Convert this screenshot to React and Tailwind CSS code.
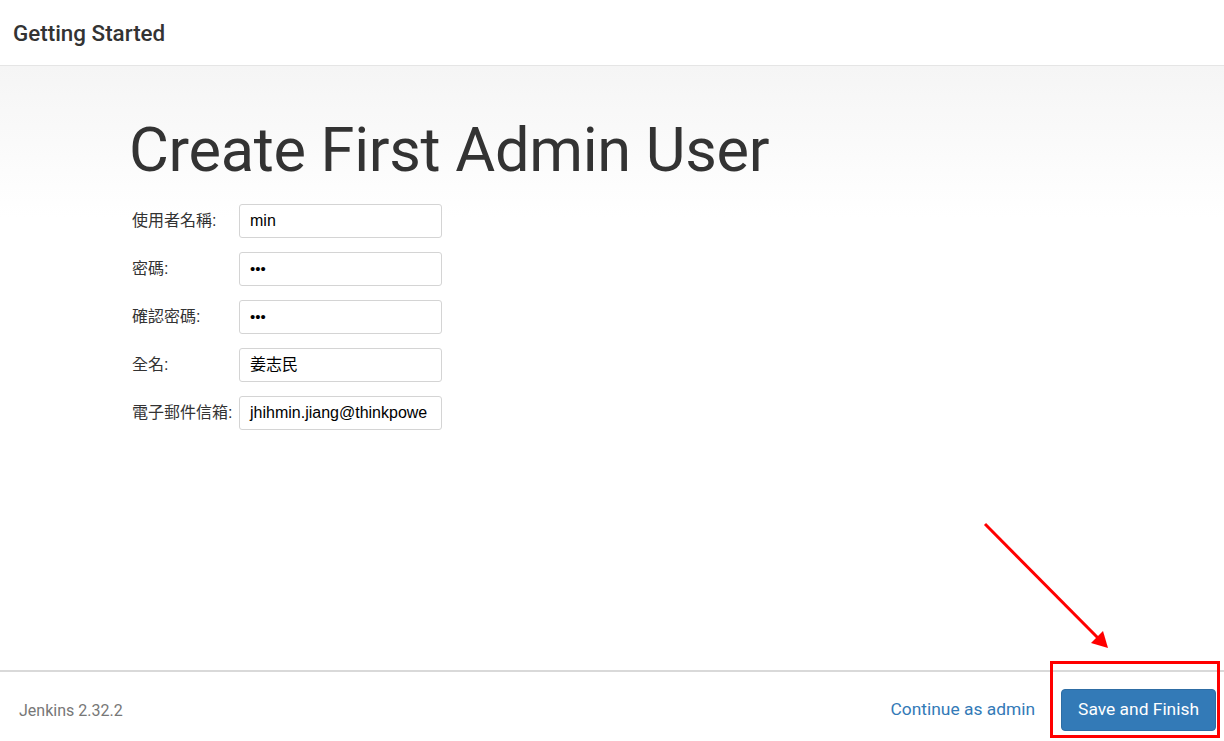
import React from "react";

const rows = [
  { label: "使用者名稱:", value: "min" },
  { label: "密碼:", value: "•••", pw: true },
  { label: "確認密碼:", value: "•••", pw: true },
  { label: "全名:", value: "姜志民" },
  { label: "電子郵件信箱:", value: "jhihmin.jiang@thinkpowe" },
];

export default function App() {
  return (
    <div
      className="relative w-[1224px] h-[741px] flex flex-col bg-white text-[#333] overflow-hidden"
      style={{ fontFamily: 'Roboto, "Noto Sans CJK TC", sans-serif' }}
    >
      <header className="h-[66px] shrink-0 border-b border-[#e5e5e5] flex items-center pl-[13px] pt-[2px]">
        <h2 className="text-[22.4px] font-medium text-[#333] leading-none">Getting Started</h2>
      </header>

      <main className="flex-1 bg-gradient-to-b from-[#f5f5f5] via-white via-[25%] to-white pt-[50px] pl-[129px]">
        <h1 className="text-[61.3px] leading-[68px] font-normal text-[#333] tracking-[-0.3px]">
          Create First Admin User
        </h1>
        <div className="mt-[20px] flex flex-col gap-[14px]">
          {rows.map((r) => (
            <div key={r.label} className="flex items-center">
              <label
                className="w-[110px] pl-[3px] text-[16px] text-[#333]"
                style={{ fontFamily: '"Liberation Sans", "Noto Sans CJK TC", sans-serif' }}
              >
                {r.label}
              </label>
              <div
                className="w-[203px] h-[34px] border border-[#d4d4d4] rounded-[3px] bg-white flex items-center pl-[10px] pr-[6px]"
                style={{ fontFamily: '"Liberation Sans", "Noto Sans CJK TC", sans-serif' }}
              >
                <div className="whitespace-nowrap text-[16px] text-black">
                  {r.pw ? <span className="text-[15px] leading-none">•••</span> : r.value}
                </div>
              </div>
            </div>
          ))}
        </div>
      </main>

      <footer className="h-[71px] shrink-0 border-t-2 border-[#d9d9d9] flex items-center pl-[19px] pr-[8px] pt-[6px]">
        <span className="text-[16px] text-[#777] mt-[2px]">Jenkins 2.32.2</span>
        <div className="ml-auto flex items-center gap-[26px]">
          <span className="text-[17.4px] text-[#337ab7]">Continue as admin</span>
          <button className="h-[42px] px-[16px] rounded-[4px] bg-[#337ab7] border border-[#2e6da4] text-white text-[17.4px]">
            Save and Finish
          </button>
        </div>
      </footer>

      <div className="absolute left-[1050px] top-[661px] w-[170px] h-[77px] border-[3px] border-[#ff0000]" />
      <svg className="absolute left-0 top-0" width="1224" height="741" viewBox="0 0 1224 741">
        <line x1="985" y1="524" x2="1098" y2="638" stroke="#ff0000" strokeWidth="3" />
        <polygon points="1108,648 1091,643 1103,631" fill="#ff0000" />
      </svg>
    </div>
  );
}
